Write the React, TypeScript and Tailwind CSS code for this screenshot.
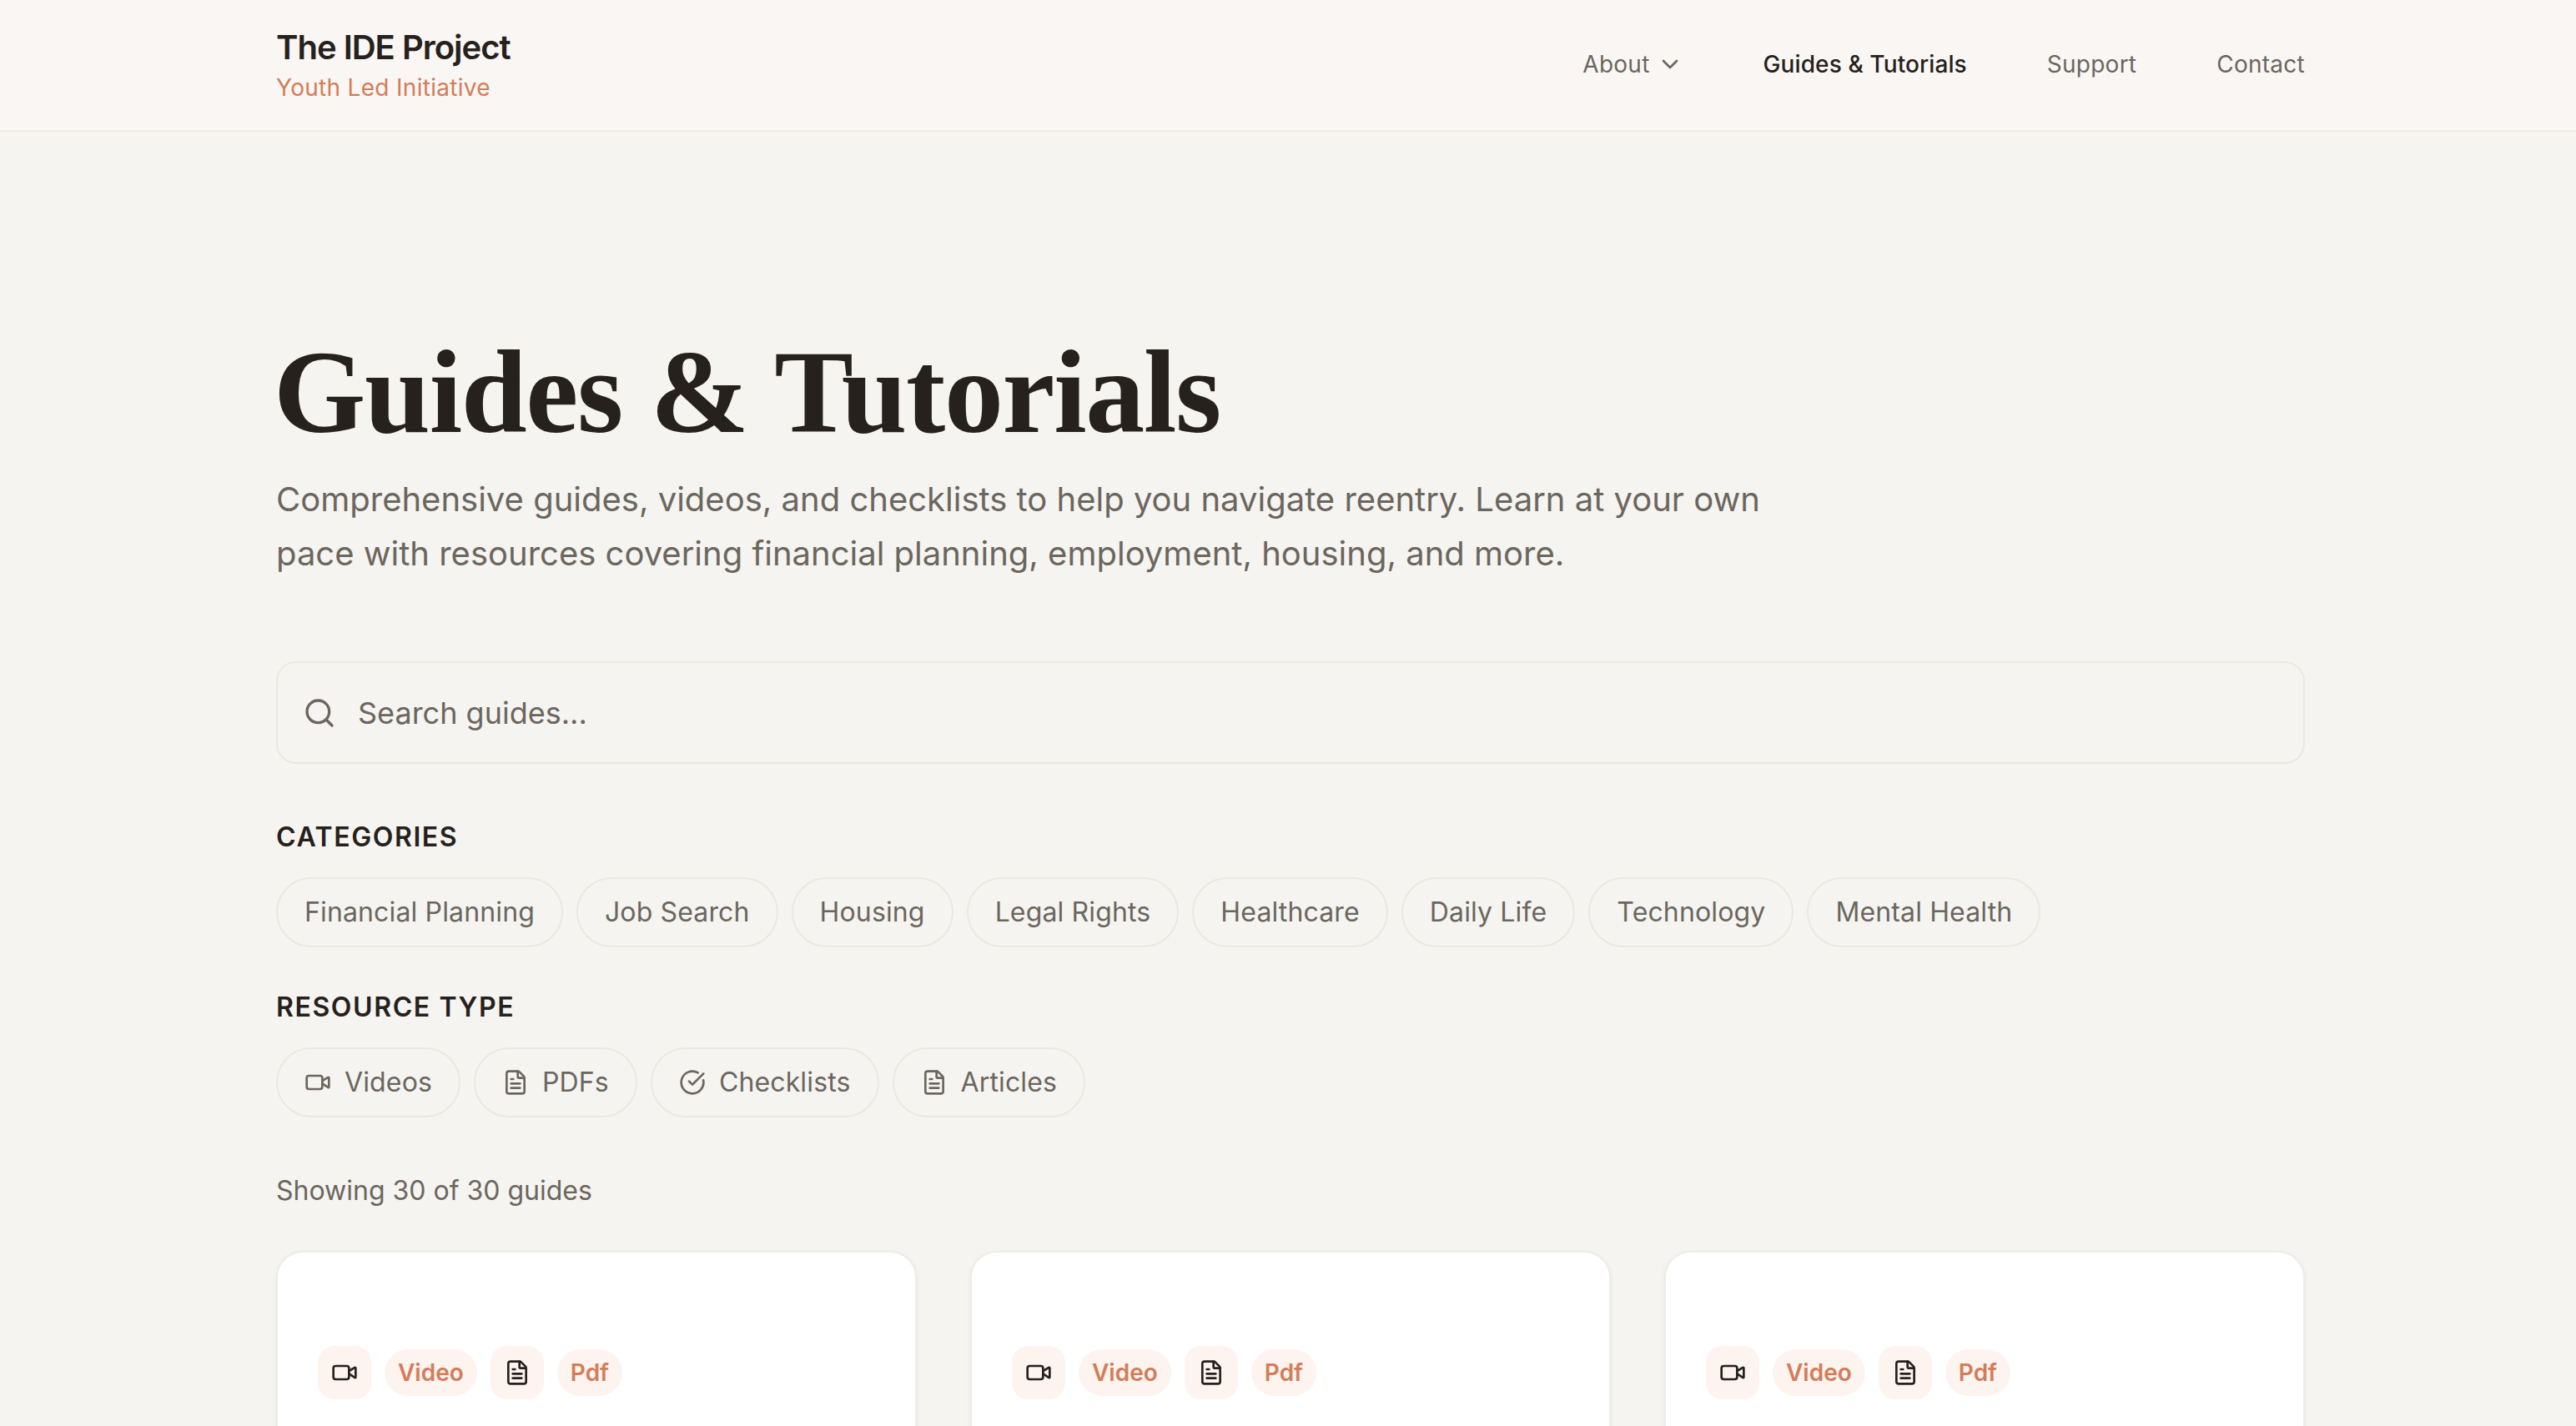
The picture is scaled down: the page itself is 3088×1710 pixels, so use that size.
import { ChevronDown, CircleCheckBig, FileText, Search, Video } from "lucide-react";

const categories = [
  "Financial Planning",
  "Job Search",
  "Housing",
  "Legal Rights",
  "Healthcare",
  "Daily Life",
  "Technology",
  "Mental Health",
];

const resourceTypes = [
  { label: "Videos", icon: Video },
  { label: "PDFs", icon: FileText },
  { label: "Checklists", icon: CircleCheckBig },
  { label: "Articles", icon: FileText },
];

function Chip({ children }: { children: React.ReactNode }) {
  return (
    <button className="flex h-[84px] items-center gap-4 rounded-full border-2 border-[#ebe8e3] px-8 text-[32px] leading-[48px] tracking-[0.14px] text-[#6b665e]">
      {children}
    </button>
  );
}

function GuideCard() {
  return (
    <div className="h-[500px] rounded-[32px] border-2 border-[#efece8] bg-white pt-[112px] pl-12 shadow-[0_2px_6px_rgba(40,30,20,0.05)]">
      <div className="flex items-center gap-4">
        <span className="flex h-16 w-16 items-center justify-center rounded-[20px] bg-[#fdf3ef] text-[#26211c]">
          <Video size={32} strokeWidth={2} />
        </span>
        <span className="flex h-14 items-center rounded-full bg-[#fdf3ef] px-4 text-[28px] font-semibold text-[#d27d5a]">
          Video
        </span>
        <span className="flex h-16 w-16 items-center justify-center rounded-[20px] bg-[#fdf3ef] text-[#26211c]">
          <FileText size={32} strokeWidth={2} />
        </span>
        <span className="flex h-14 items-center rounded-full bg-[#fdf3ef] px-4 text-[28px] font-semibold text-[#d27d5a]">
          Pdf
        </span>
      </div>
    </div>
  );
}

export default function App() {
  return (
    <div className="h-[1710px] overflow-hidden bg-[#f6f4f0] font-['Inter',sans-serif] text-[#26211c]">
      <header className="h-[158px] border-b-2 border-[#efece8] bg-[#faf6f3]">
        <div className="ml-[331px] flex h-[154px] w-[2432px] items-center justify-between">
          <div>
            <div className="text-[40px] leading-[56px] font-semibold tracking-[-1px]">The IDE Project</div>
            <div className="text-[28px] leading-[40px] tracking-[0.3px] text-[#d27d5a]">Youth Led Initiative</div>
          </div>
          <nav className="flex items-center gap-24 text-[28px] tracking-[0.25px] text-[#6b665e]">
            <span className="flex items-center gap-2">
              About <ChevronDown size={32} strokeWidth={2} />
            </span>
            <span className="font-medium tracking-[0.1px] text-[#26211c]">Guides & Tutorials</span>
            <span>Support</span>
            <span>Contact</span>
          </nav>
        </div>
      </header>

      <main className="ml-[331px] w-[2432px] pt-[232px]">
        <h1 className="-ml-[3px] font-['Liberation_Serif',serif] text-[142px] leading-[160px] font-bold tracking-[-1.4px]">
          Guides & Tutorials
        </h1>
        <p className="mt-4 max-w-[1792px] text-[40px] leading-[65px] text-[#6b665e]">
          Comprehensive guides, videos, and checklists to help you navigate reentry. Learn at your own pace with
          resources covering financial planning, employment, housing, and more.
        </p>

        <div className="mt-[97px] flex h-[123px] items-center gap-[26px] rounded-3xl border-2 border-[#ebe8e3] px-[30px] text-[36px] text-[#6b665e]">
          <Search size={40} strokeWidth={2} />
          <span>Search guides...</span>
        </div>

        <h2 className="mt-[66px] text-[32px] leading-[44px] font-semibold tracking-[1.6px] uppercase">Categories</h2>
        <div className="mt-[26px] flex gap-4">
          {categories.map((name) => (
            <Chip key={name}>{name}</Chip>
          ))}
        </div>

        <h2 className="mt-[50px] text-[32px] leading-[44px] font-semibold tracking-[1.6px] uppercase">Resource Type</h2>
        <div className="mt-[26px] flex gap-4">
          {resourceTypes.map((type) => (
            <Chip key={type.label}>
              <type.icon size={32} strokeWidth={2} />
              {type.label}
            </Chip>
          ))}
        </div>

        <p className="mt-[66px] text-[32px] leading-[44px] text-[#6b665e]">Showing 30 of 30 guides</p>

        <div className="mt-[50px] grid grid-cols-3 gap-16">
          <GuideCard />
          <GuideCard />
          <GuideCard />
        </div>
      </main>
    </div>
  );
}
